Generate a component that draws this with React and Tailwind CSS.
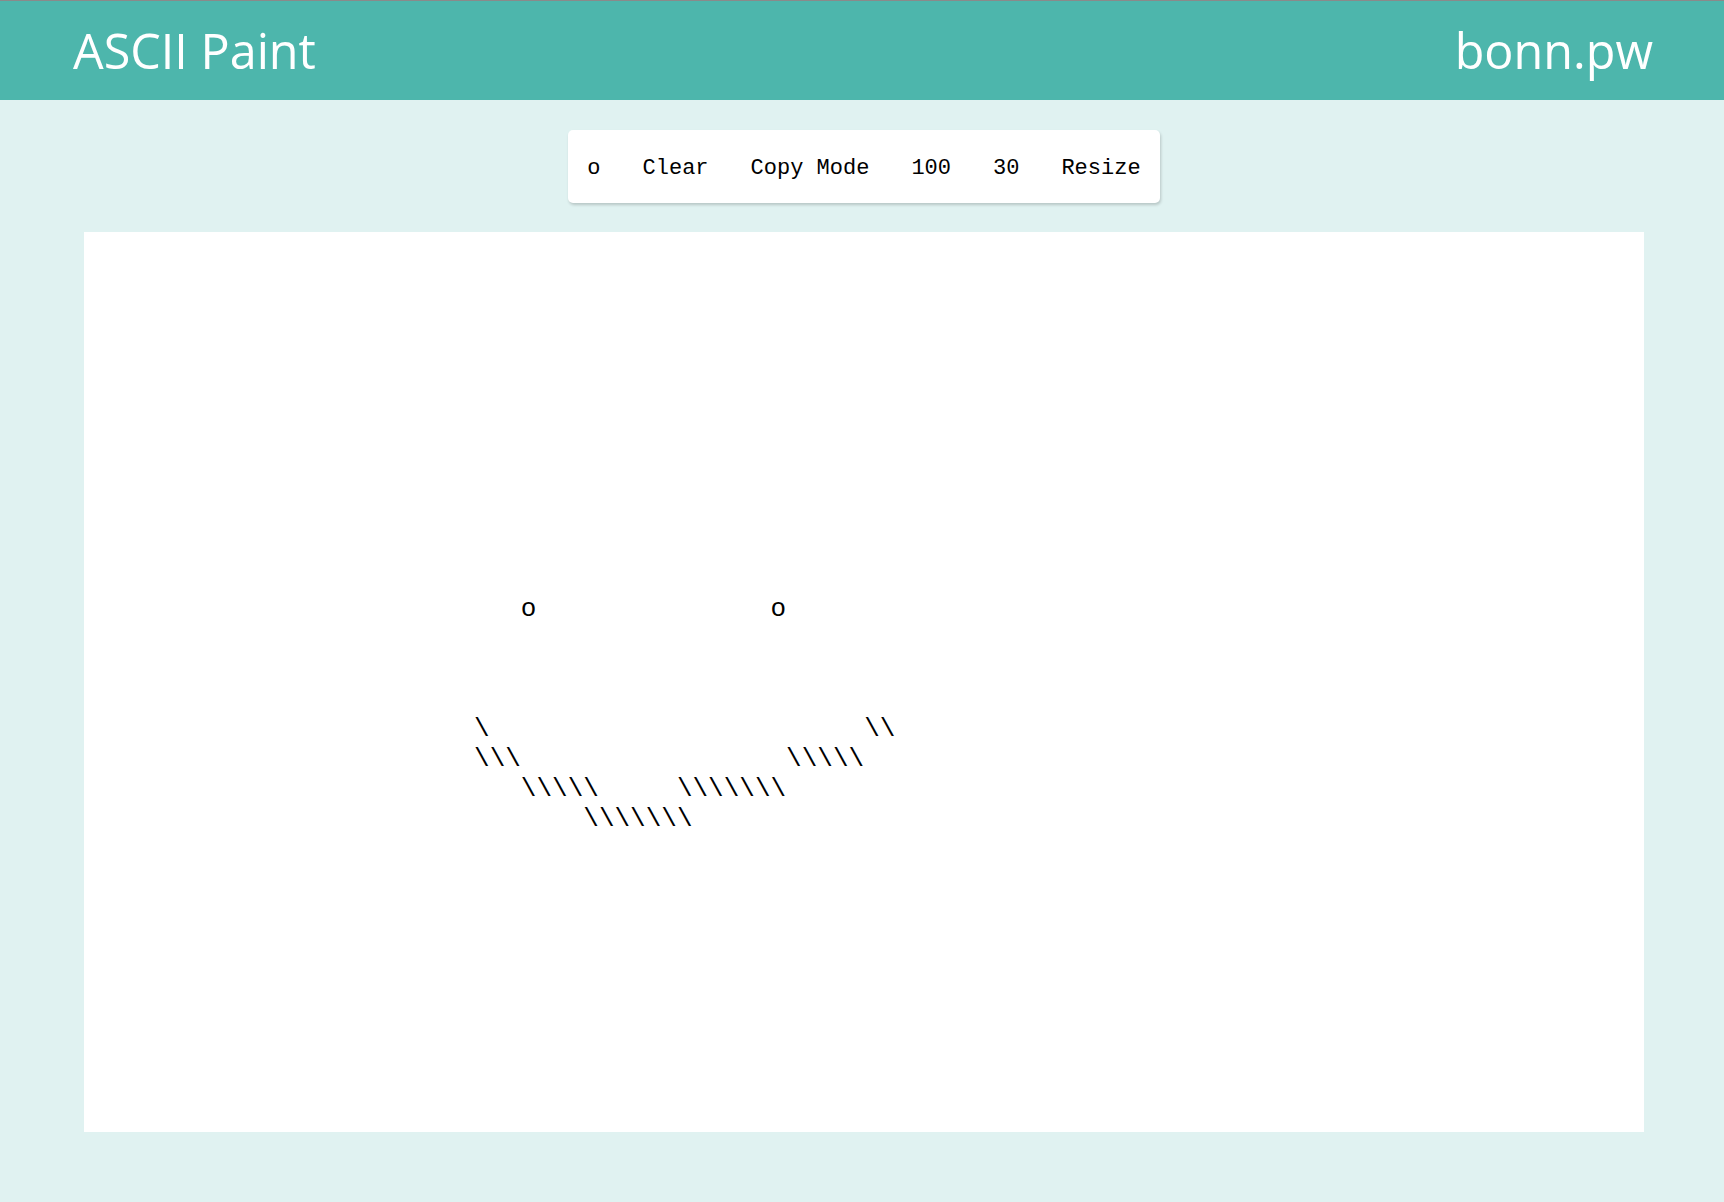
import React from "react";

const ROWS = 30;
const COLS = 100;

function buildArt() {
  const grid = Array.from({ length: ROWS }, () => Array(COLS).fill(" "));
  const put = (r, c, s) => {
    for (let i = 0; i < s.length; i++) grid[r][c + i] = s[i];
  };
  put(12, 28, "o");
  put(12, 44, "o");
  put(16, 25, "\\");
  put(16, 50, "\\\\");
  put(17, 25, "\\\\\\");
  put(17, 45, "\\\\\\\\\\");
  put(18, 28, "\\\\\\\\\\");
  put(18, 38, "\\\\\\\\\\\\\\");
  put(19, 32, "\\\\\\\\\\\\\\");
  return grid
    .map((r) => r.join("").replace(/\s+$/, ""))
    .join("\n")
    .replace(/\s+$/, "");
}

const art = buildArt();

export default function App() {
  const items = ["o", "Clear", "Copy Mode", "100", "30", "Resize"];
  return (
    <div className="min-h-screen bg-[#e0f2f1]">
      <header
        className="h-[100px] bg-[#4db6ac] border-t border-[#8a8a8a] flex items-center justify-between pl-[73px] pr-[71px] text-white text-[48.5px]"
        style={{ fontFamily: '"Open Sans", sans-serif' }}
      >
        <span>ASCII Paint</span>
        <span>bonn.pw</span>
      </header>
      <div className="flex justify-center pt-[30px] pl-[4px]">
        <div
          className="h-[73px] bg-white rounded-[5px] shadow-[1px_2px_3px_rgba(0,0,0,0.18)] flex items-center pt-[3px] pl-[19px] pr-[19px] text-[22px] text-black"
          style={{ fontFamily: '"Liberation Mono", monospace' }}
        >
          {items.map((t, i) => (
            <span
              key={t}
              className={
                "whitespace-pre " + (i === 0 ? "pr-[21px]" : i === items.length - 1 ? "pl-[21px]" : "px-[21px]")
              }
            >
              {t}
            </span>
          ))}
        </div>
      </div>
      <div className="pt-[29px] pl-[84px]">
        <pre
          className="box-border w-[1560px] h-[900px] pt-[2px] bg-white text-black text-[26px] leading-[30px] m-0"
          style={{ fontFamily: '"Liberation Mono", monospace' }}
        >
          {art}
        </pre>
      </div>
    </div>
  );
}
